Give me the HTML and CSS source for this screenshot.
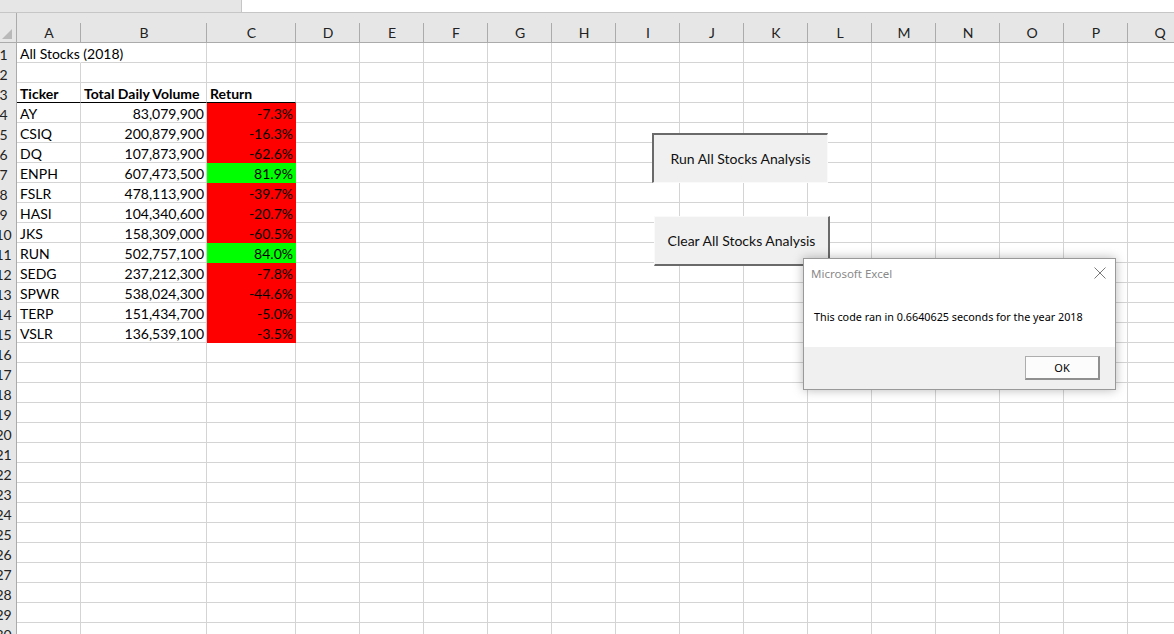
FILE: index.html
```html
<!DOCTYPE html>
<html>
<head>
<meta charset="utf-8">
<link rel="stylesheet" href="styles.css">
</head>
<body>
<div class="app">
  <div class="topstrip"><div class="fbar"></div></div>
  <div class="colheads">
    <div class="corner"><span class="tri"></span></div>
    <div class="ch">A</div><div class="ch">B</div><div class="ch">C</div><div class="ch">D</div><div class="ch">E</div><div class="ch">F</div><div class="ch">G</div><div class="ch">H</div><div class="ch">I</div><div class="ch">J</div><div class="ch">K</div><div class="ch">L</div><div class="ch">M</div><div class="ch">N</div><div class="ch">O</div><div class="ch">P</div><div class="ch">Q</div>
  </div>
  <div class="sheet">
    <div class="row"><div class="rh"><span>1</span></div><div class="c over">All Stocks (2018)</div><div class="c"></div><div class="c"></div><div class="rest"></div></div>
    <div class="row"><div class="rh"><span>2</span></div><div class="c"></div><div class="c"></div><div class="c"></div><div class="rest"></div></div>
    <div class="row"><div class="rh"><span>3</span></div><div class="c b hd">Ticker</div><div class="c b hd">Total Daily Volume</div><div class="c b hd">Return</div><div class="rest"></div></div>
    <div class="row"><div class="rh"><span>4</span></div><div class="c">AY</div><div class="c num">83,079,900</div><div class="c num red">-7.3%</div><div class="rest"></div></div>
    <div class="row"><div class="rh"><span>5</span></div><div class="c">CSIQ</div><div class="c num">200,879,900</div><div class="c num red">-16.3%</div><div class="rest"></div></div>
    <div class="row"><div class="rh"><span>6</span></div><div class="c">DQ</div><div class="c num">107,873,900</div><div class="c num red">-62.6%</div><div class="rest"></div></div>
    <div class="row"><div class="rh"><span>7</span></div><div class="c">ENPH</div><div class="c num">607,473,500</div><div class="c num green">81.9%</div><div class="rest"></div></div>
    <div class="row"><div class="rh"><span>8</span></div><div class="c">FSLR</div><div class="c num">478,113,900</div><div class="c num red">-39.7%</div><div class="rest"></div></div>
    <div class="row"><div class="rh"><span>9</span></div><div class="c">HASI</div><div class="c num">104,340,600</div><div class="c num red">-20.7%</div><div class="rest"></div></div>
    <div class="row"><div class="rh"><span>10</span></div><div class="c">JKS</div><div class="c num">158,309,000</div><div class="c num red">-60.5%</div><div class="rest"></div></div>
    <div class="row"><div class="rh"><span>11</span></div><div class="c">RUN</div><div class="c num">502,757,100</div><div class="c num green">84.0%</div><div class="rest"></div></div>
    <div class="row"><div class="rh"><span>12</span></div><div class="c">SEDG</div><div class="c num">237,212,300</div><div class="c num red">-7.8%</div><div class="rest"></div></div>
    <div class="row"><div class="rh"><span>13</span></div><div class="c">SPWR</div><div class="c num">538,024,300</div><div class="c num red">-44.6%</div><div class="rest"></div></div>
    <div class="row"><div class="rh"><span>14</span></div><div class="c">TERP</div><div class="c num">151,434,700</div><div class="c num red">-5.0%</div><div class="rest"></div></div>
    <div class="row"><div class="rh"><span>15</span></div><div class="c">VSLR</div><div class="c num">136,539,100</div><div class="c num red">-3.5%</div><div class="rest"></div></div>
    <div class="row"><div class="rh"><span>16</span></div><div class="c"></div><div class="c"></div><div class="c"></div><div class="rest"></div></div>
    <div class="row"><div class="rh"><span>17</span></div><div class="c"></div><div class="c"></div><div class="c"></div><div class="rest"></div></div>
    <div class="row"><div class="rh"><span>18</span></div><div class="c"></div><div class="c"></div><div class="c"></div><div class="rest"></div></div>
    <div class="row"><div class="rh"><span>19</span></div><div class="c"></div><div class="c"></div><div class="c"></div><div class="rest"></div></div>
    <div class="row"><div class="rh"><span>20</span></div><div class="c"></div><div class="c"></div><div class="c"></div><div class="rest"></div></div>
    <div class="row"><div class="rh"><span>21</span></div><div class="c"></div><div class="c"></div><div class="c"></div><div class="rest"></div></div>
    <div class="row"><div class="rh"><span>22</span></div><div class="c"></div><div class="c"></div><div class="c"></div><div class="rest"></div></div>
    <div class="row"><div class="rh"><span>23</span></div><div class="c"></div><div class="c"></div><div class="c"></div><div class="rest"></div></div>
    <div class="row"><div class="rh"><span>24</span></div><div class="c"></div><div class="c"></div><div class="c"></div><div class="rest"></div></div>
    <div class="row"><div class="rh"><span>25</span></div><div class="c"></div><div class="c"></div><div class="c"></div><div class="rest"></div></div>
    <div class="row"><div class="rh"><span>26</span></div><div class="c"></div><div class="c"></div><div class="c"></div><div class="rest"></div></div>
    <div class="row"><div class="rh"><span>27</span></div><div class="c"></div><div class="c"></div><div class="c"></div><div class="rest"></div></div>
    <div class="row"><div class="rh"><span>28</span></div><div class="c"></div><div class="c"></div><div class="c"></div><div class="rest"></div></div>
    <div class="row"><div class="rh"><span>29</span></div><div class="c"></div><div class="c"></div><div class="c"></div><div class="rest"></div></div>
    <div class="row"><div class="rh"><span>30</span></div><div class="c"></div><div class="c"></div><div class="c"></div><div class="rest"></div></div>
  </div>

  <div class="btn btn-run">Run All Stocks Analysis</div>
  <div class="btn btn-clear">Clear All Stocks Analysis</div>

  <div class="dialog">
    <div class="dlg-title">
      <span class="dlg-name">Microsoft Excel</span>
      <svg class="dlg-close" width="12" height="12" viewBox="0 0 12 12"><path d="M0.5 0.5 L11.5 11.5 M11.5 0.5 L0.5 11.5" stroke="#7a7a7a" stroke-width="1" fill="none"/></svg>
    </div>
    <div class="dlg-body">This code ran in 0.6640625 seconds for the year 2018</div>
    <div class="dlg-foot"><div class="okbtn">OK</div></div>
  </div>
</div>
</body>
</html>
```

FILE: styles.css
```css
html, body {
  margin: 0;
  padding: 0;
  background: #ffffff;
  overflow: hidden;
}
.app {
  position: relative;
  width: 1174px;
  height: 634px;
  overflow: hidden;
  font-family: Lato, "Liberation Sans", sans-serif;
  font-size: 14px;
  color: #000;
}
.topstrip {
  height: 13px;
  background: #e6e6e6;
  display: flex;
  border-bottom: 1px solid #c6c6c6;
  box-sizing: border-box;
}
.fbar {
  margin-left: 241px;
  flex: 1;
  background: #fff;
  border-left: 1px solid #c6c6c6;
}
.colheads {
  display: grid;
  grid-template-columns: 17px 64px 126px 89px repeat(14, 64px);
  height: 30px;
  background: #e6e6e6;
  border-bottom: 1px solid #ababab;
  box-sizing: border-box;
}
.corner {
  position: relative;
  border-right: 1px solid #ababab;
}
.tri {
  position: absolute;
  right: 4px;
  bottom: 3px;
  width: 0;
  height: 0;
  border-left: 10px solid transparent;
  border-bottom: 10px solid #b9b9b9;
}
.ch {
  position: relative;
  display: flex;
  align-items: center;
  justify-content: center;
  padding-top: 9px;
  font-family: Lato, "Liberation Sans", sans-serif;
  font-size: 14px;
  color: #222;
}
.ch::after {
  content: "";
  position: absolute;
  right: 0;
  top: 10px;
  bottom: 0;
  width: 1px;
  background: #ababab;
}
.sheet {
  display: flex;
  flex-direction: column;
}
.row {
  display: grid;
  grid-template-columns: 17px 64px 126px 89px 1fr;
  height: 20px;
}
.rh {
  display: flex;
  justify-content: center;
  align-items: flex-end;
  padding-right: 9px;
  padding-bottom: 0;
  background: #e6e6e6;
  border-right: 1px solid #ababab;
  color: #222;
  font-size: 14px;
  line-height: 17px;
  white-space: nowrap;
}
.rh span { flex: none; }
.c {
  box-sizing: border-box;
  border-right: 1px solid #d4d4d4;
  border-bottom: 1px solid #d4d4d4;
  padding: 0 3px 0 3px;
  display: flex;
  align-items: flex-end;
  line-height: 17px;
  white-space: nowrap;
  min-width: 0;
}
.c.over { overflow: visible; border-right-color: transparent; }
.c.num { justify-content: flex-end; padding-right: 2px; }
.c.b { font-weight: 700; }
.c.hd { border-bottom: 1px solid #000; }
.c.red { background: #ff0000; border-right-color: #ff0000; border-bottom-color: #ff0000; }
.c.green { background: #00ff00; border-right-color: #00ff00; border-bottom-color: #00ff00; }
.rest {
  box-sizing: border-box;
  border-bottom: 1px solid #d4d4d4;
  background-image: repeating-linear-gradient(to right, transparent 0, transparent 63px, #d4d4d4 63px, #d4d4d4 64px);
}

.btn {
  position: absolute;
  box-sizing: border-box;
  background: #f0f0f0;
  display: flex;
  align-items: center;
  justify-content: center;
  font-size: 14px;
  color: #111;
}
.btn-run {
  left: 652px;
  top: 133px;
  width: 176px;
  height: 50px;
  border-top: 2px solid #6a6a6a;
  border-left: 2px solid #6a6a6a;
  border-right: 1px solid #fafafa;
  border-bottom: 1px solid #fafafa;
}
.btn-clear {
  left: 654px;
  top: 216px;
  width: 176px;
  height: 50px;
  border-bottom: 2px solid #6a6a6a;
  border-right: 2px solid #6a6a6a;
  border-top: 1px solid #fafafa;
  border-left: 1px solid #fafafa;
}

.dialog {
  position: absolute;
  left: 803px;
  top: 258px;
  width: 313px;
  height: 132px;
  box-sizing: border-box;
  background: #fff;
  border: 1px solid #999;
  box-shadow: 0 0 10px rgba(0,0,0,0.28);
  display: flex;
  flex-direction: column;
  font-family: "Noto Sans", "Open Sans", sans-serif;
  font-size: 11px;
}
.dlg-title {
  height: 28px;
  display: flex;
  align-items: center;
  justify-content: space-between;
  padding: 0 9px 0 7px;
}
.dlg-name {
  color: #8a8a8a;
  font-size: 11.5px;
}
.dlg-body {
  flex: 1;
  display: flex;
  align-items: center;
  padding: 0 0 2px 10px;
  color: #000;
  font-size: 10.8px;
}
.dlg-foot {
  height: 42px;
  background: #f0f0f0;
  display: flex;
  align-items: center;
  justify-content: flex-end;
  padding-right: 15px;
}
.okbtn {
  width: 75px;
  height: 24px;
  box-sizing: border-box;
  border: 1px solid #adadad;
  border-right: 2px solid #8f8f8f;
  border-bottom: 2px solid #8f8f8f;
  background: #fcfcfc;
  display: flex;
  align-items: center;
  justify-content: center;
  font-size: 11px;
  color: #000;
}
```
